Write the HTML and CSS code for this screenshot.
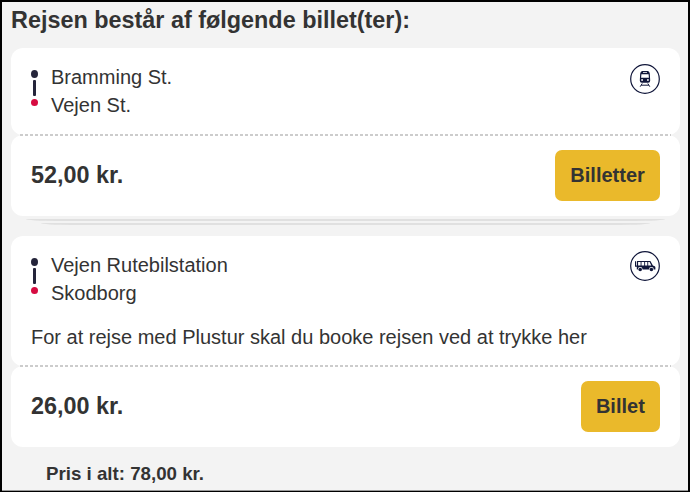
FILE: index.html
```html
<!DOCTYPE html>
<html lang="da">
<head>
  <meta charset="UTF-8">
  <meta name="viewport" content="width=device-width, initial-scale=1.0">
  <title>Rejsens billetter</title>
  <link rel="stylesheet" href="styles.css">
</head>
<body>
  <div class="container">
    <h1>Rejsen består af følgende billet(ter):</h1>

    <div class="ticket">
      <div class="ticket-trip">
        <div class="route">
          <div class="route-marker">
            <span class="dot"></span>
            <span class="line"></span>
            <span class="dot dot-end"></span>
          </div>
          <div class="stops">
            <p>Bramming St.</p>
            <p>Vejen St.</p>
          </div>
          <svg class="transport" viewBox="0 0 30 30" width="30" height="30">
            <circle cx="15" cy="15" r="14.3" fill="#fff" stroke="#10163a" stroke-width="1.2"/>
            <path fill="#10163a" fill-rule="evenodd" d="M12 7h6q1.6.5 1.8 2.5l.4 7q0 2.2-2 2.3h-6.4q-2-.1-2-2.3l.4-7q.3-2 1.8-2.5zM13 8v.8h4v-.8zM11.4 10.2l-.3 3.5h7.8l-.3-3.5zM11.2 15.2v1.5h1.8v-1.5zM17 15.2v1.5h1.8v-1.5z"/>
            <path fill="none" stroke="#10163a" stroke-width="1" d="M12.2 19.5l-2 3.2M17.8 19.5l2 3.2M11.2 21.2h7.6"/>
          </svg>
        </div>
      </div>
      <div class="ticket-price">
        <span class="price">52,00 kr.</span>
        <button class="btn">Billetter</button>
      </div>
      <div class="stack"></div>
      <div class="stack stack-last"></div>
    </div>

    <div class="ticket">
      <div class="ticket-trip">
        <div class="route">
          <div class="route-marker">
            <span class="dot"></span>
            <span class="line"></span>
            <span class="dot dot-end"></span>
          </div>
          <div class="stops">
            <p>Vejen Rutebilstation</p>
            <p>Skodborg</p>
          </div>
          <svg class="transport transport-van" viewBox="0 0 30 30" width="30" height="30">
            <circle cx="15" cy="15" r="14.3" fill="#fff" stroke="#10163a" stroke-width="1.2"/>
            <path fill="#10163a" fill-rule="evenodd" d="M5 10.3h1.2v4.2h.8v-4.4h13.4l2.5 4.5 1.8.7q.7.3.7 1.2v2h-1.6a2.4 2.4 0 0 0-4.8 0h-6.4a2.4 2.4 0 0 0-4.8 0H6.8v-2.8H5zM8.1 11v3.6h2.5v-3.6zM11.5 11v3.6h2.7v-3.6zM15.1 11v3.6h2.2v-3.6zM18.2 11v3.6h3.1l-1.7-3.6z"/>
            <circle cx="10.2" cy="18.5" r="1.8" fill="#10163a"/>
            <circle cx="21.4" cy="18.5" r="1.8" fill="#10163a"/>
          </svg>
        </div>
        <p class="note">For at rejse med Plustur skal du booke rejsen ved at trykke her</p>
      </div>
      <div class="ticket-price">
        <span class="price">26,00 kr.</span>
        <button class="btn">Billet</button>
      </div>
    </div>

    <p class="total">Pris i alt: 78,00 kr.</p>
  </div>
</body>
</html>
```
FILE: styles.css
```css
* {
  box-sizing: border-box;
}

body {
  margin: 0;
  font-family: "Liberation Sans", Arial, sans-serif;
  font-size: 20px;
  line-height: 28px;
  color: #333;
}

h1,
p {
  margin: 0;
}

.container {
  height: 492px;
  padding: 4px 8px 0 9px;
  background-color: #f3f3f3;
  border: 2px solid #000;
  border-bottom-width: 1px;
  box-shadow: inset 0 -1px 0 #999;
  overflow: hidden;
}

h1 {
  margin-bottom: 14px;
  font-size: 23.4px;
}

.ticket {
  margin-bottom: 11px;
}

.ticket-trip {
  position: relative;
  padding: 15px 20px 16px;
  background-color: #fff;
  border-radius: 12px;
}

/* perforation between trip and price */
.ticket-trip::after {
  content: "";
  position: absolute;
  left: 9px;
  right: 9px;
  bottom: -1px;
  z-index: 1;
  height: 2px;
  background: repeating-linear-gradient(to right, #ccc 0 3px, #fff 3px 5px);
}

.route {
  display: flex;
}

.route-marker {
  display: flex;
  flex-direction: column;
  align-items: center;
  width: 7px;
  margin-right: 13px;
  padding-top: 7px;
}

.dot {
  width: 7px;
  height: 8px;
  border-radius: 50%;
  background-color: #25253b;
}

.line {
  width: 3px;
  height: 16px;
  margin: 2px 0 3px;
  border-radius: 1px;
  background-color: #25253b;
}

.dot-end {
  height: 7px;
  background-color: #d60b41;
}

.stops {
  flex: 1;
}

.transport {
  margin-top: 1px;
}

.transport-van {
  margin-top: 0;
}

.note {
  margin: 16px 0 -1px;
}

.ticket-price {
  display: flex;
  justify-content: space-between;
  height: 81px;
  padding: 15px 20px;
  background-color: #fff;
  border-radius: 12px;
}

.price {
  padding-top: 11px;
  font-size: 23.4px;
  font-weight: bold;
}

.btn {
  height: 51px;
  padding: 0 15.2px;
  border: 0;
  border-radius: 7px;
  background-color: #eab92b;
  color: #333;
  font-family: inherit;
  font-size: 20px;
  font-weight: bold;
}

/* edges of the tickets lying underneath */
.stack {
  height: 5px;
  margin: 0 15px;
  border-bottom: 2px solid #e0e0e0;
  border-radius: 0 0 30px 30px / 0 0 2px 2px;
}

.stack-last {
  height: 4px;
  margin: 0 30px;
}

.total {
  padding: 2px 0 0 35px;
  font-size: 18.72px;
  font-weight: bold;
}
```
